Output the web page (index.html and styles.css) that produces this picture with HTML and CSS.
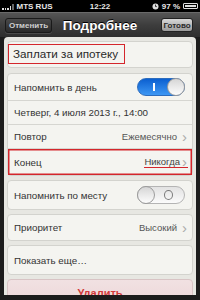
FILE: index.html
```html
<!DOCTYPE html>
<html>
<head>
<meta charset="utf-8">
<link rel="stylesheet" href="styles.css">
</head>
<body>
<div class="screen">
  <div class="status">
    <div class="st-left">
      <span class="bars"><i class="b1"></i><i class="b2"></i><i class="b3"></i><i class="b4"></i><i class="b5"></i></span>
      <span>MTS RUS</span>
    </div>
    <div class="st-time">12:22</div>
    <div class="st-right">
      <svg class="lock" width="7" height="7" viewBox="0 0 7 7"><circle cx="3.5" cy="3.5" r="3" fill="#ddd"/><path d="M3.5 1.6v2h1.3" stroke="#222" stroke-width="0.9" fill="none"/></svg>
      <span>97 %</span>
      <span class="battery"><span class="bfill"></span></span>
    </div>
  </div>
  <div class="nav">
    <button class="btn cancel">Отменить</button>
    <div class="title">Подробнее</div>
    <button class="btn done">Готово</button>
  </div>
  <div class="panel">
    <div class="card title-card">
      <span class="mark">Заплати за ипотеку</span>
    </div>
    <div class="card">
      <div class="row r-toggle">
        <span class="label">Напомнить в день</span>
        <span class="switch on"><span class="on-bar"></span><span class="knob"></span></span>
      </div>
      <div class="row r-24"><span class="label">Четверг, 4 июля 2013 г., 14:00</span></div>
      <div class="row r-24">
        <span class="label">Повтор</span>
        <span class="value">Ежемесячно<span class="chev">›</span></span>
      </div>
      <div class="row r-last hl">
        <span class="label">Конец</span>
        <span class="value"><span class="uline">Никогда</span><span class="chev">›</span></span>
      </div>
    </div>
    <div class="card">
      <div class="row r-single">
        <span class="label">Напомнить по месту</span>
        <span class="switch off"><span class="knob"></span><span class="off-ring"></span></span>
      </div>
    </div>
    <div class="card">
      <div class="row r-prio">
        <span class="label">Приоритет</span>
        <span class="value">Высокий<span class="chev">›</span></span>
      </div>
    </div>
    <div class="card">
      <div class="row r-single"><span class="label">Показать еще…</span></div>
    </div>
    <div class="delete">Удалить</div>
  </div>
</div>
</body>
</html>
```

FILE: styles.css
```css
* { box-sizing: border-box; }
html, body { margin: 0; padding: 0; }
body {
  width: 200px;
  height: 300px;
  overflow: hidden;
  background: #1c1c1c;
  font-family: "Liberation Sans", Arial, sans-serif;
}
.screen { width: 200px; height: 300px; display: flex; flex-direction: column; overflow: hidden; }

.status {
  height: 12px;
  background: #000;
  color: #e8e8e8;
  font-size: 8px;
  font-weight: bold;
  display: flex;
  align-items: center;
  justify-content: space-between;
  padding: 0 2px 0 2px;
  position: relative;
}
.st-left { display: flex; align-items: center; gap: 3px; }
.bars { display: flex; align-items: flex-end; gap: 1px; height: 7px; }
.bars i { display: block; width: 1.5px; background: #ddd; }
.bars .b1 { height: 2px; }
.bars .b2 { height: 2px; }
.bars .b3 { height: 2px; }
.bars .b4 { height: 4px; }
.bars .b5 { height: 6px; background: #666; }
.st-time { position: absolute; left: 0; right: 0; text-align: center; }
.st-right { display: flex; align-items: center; gap: 3px; position: relative; }
.battery {
  width: 15px; height: 6px; border: 1px solid #ddd; border-radius: 1px; padding: 1px; display: block;
}
.bfill { display: block; height: 100%; width: 100%; background: #ddd; }

.nav {
  height: 25px;
  background: linear-gradient(#555 0%, #3d3d3d 50%, #2e2e2e 100%);
  border-top: 1px solid #6a6a6a;
  display: flex;
  align-items: center;
  justify-content: space-between;
  padding: 0 7px 0 5px;
  position: relative;
}
.btn {
  font-family: "Liberation Sans", Arial, sans-serif;
  font-weight: bold;
  font-size: 8px;
  border-radius: 3px;
  padding: 0;
  display: flex;
  align-items: center;
  justify-content: center;
}
.cancel {
  width: 47px; height: 15px;
  background: linear-gradient(#4a4a4a, #2a2a2a);
  border: 1px solid #1a1a1a;
  color: #cfcfcf;
  box-shadow: 0 1px 0 rgba(255,255,255,0.12);
}
.done {
  width: 32px; height: 14px;
  background: linear-gradient(#d8d8d8, #9a9a9a);
  border: 1px solid #222;
  color: #2a2a2a;
}
.title {
  position: absolute; left: 0; right: 0; text-align: center;
  color: #fff; font-weight: bold; font-size: 13.5px;
  text-shadow: 0 -1px 0 #000;
  pointer-events: none;
}

.panel {
  margin: 0 4px;
  background: #e7e7e2;
  border-radius: 4px 4px 0 0;
  padding: 4px 3px 0 3px;
  display: flex;
  flex-direction: column;
  gap: 4px;
  overflow: hidden;
  height: 258px;
  flex: none;
}
.card {
  background: #f4f4f0;
  border: 1px solid #d3d3ce;
  border-radius: 4px;
  flex: none;
}
.title-card {
  height: 27px;
  padding: 2px 0 0 0;
  margin-bottom: 1px;
}
.mark {
  display: block;
  width: 117px;
  height: 20px;
  border: 1.5px solid #d4262c;
  font-size: 11.7px;
  color: #2a2a2a;
  line-height: 17px;
  padding-left: 4px;
  white-space: nowrap;
}
.row {
  display: flex;
  align-items: center;
  justify-content: space-between;
  padding: 0 5px 0 6px;
  font-size: 9.8px;
  color: #333;
  position: relative;
  white-space: nowrap;
}
.row + .row { border-top: 1px solid #d6d6d1; }
.r-toggle { height: 26px; }
.r-24 { height: 24px; }
.r-last { height: 27px; }
.r-single { height: 28px; }
.r-prio { height: 25px; }
.hl { box-shadow: inset 0 0 0 1.5px #d4262c; }
.value { color: #555; display: flex; align-items: center; font-size: 9.5px; }
.chev { color: #ababab; font-size: 15px; margin-left: 5px; line-height: 10px; }
.uline {
  border-bottom: 1.5px solid #d4262c;
  padding: 0 8px 0 0;
  margin-right: -6px;
  line-height: 11px;
  color: #444;
}
.uline + .chev { margin-left: 0; position: relative; z-index: 1; }

.switch {
  width: 48px; height: 18px; border-radius: 9px; position: relative; display: block; margin-right: 2px;
}
.switch.on {
  background: linear-gradient(#0b5fd0, #3d97f4);
  border: 1px solid #2c6cbd;
}
.switch.off {
  background: linear-gradient(#e2e2e2, #fbfbfb);
  border: 1px solid #b4b4b4;
}
.knob {
  position: absolute; top: -1px; width: 18px; height: 18px; border-radius: 50%;
  background: linear-gradient(#d6d6d6, #fdfdfd);
  border: 1px solid #9c9c9c;
}
.on .knob { right: -1px; }
.off .knob { left: -1px; }
.on-bar { position: absolute; left: 15px; top: 4px; width: 1.5px; height: 8px; background: #fff; }
.off-ring { position: absolute; right: 11px; top: 3px; width: 9px; height: 10px; border-radius: 50%; border: 1.5px solid #7a7a7a; }

.delete {
  flex: none;
  height: 30px;
  background: linear-gradient(#f1e1e2, #ecd6d8);
  border: 1px solid #d8c4c5;
  border-radius: 4px;
  color: #d23a3a;
  font-weight: bold;
  font-size: 11px;
  line-height: 11px;
  text-align: center;
  padding-top: 8px;
}
```
